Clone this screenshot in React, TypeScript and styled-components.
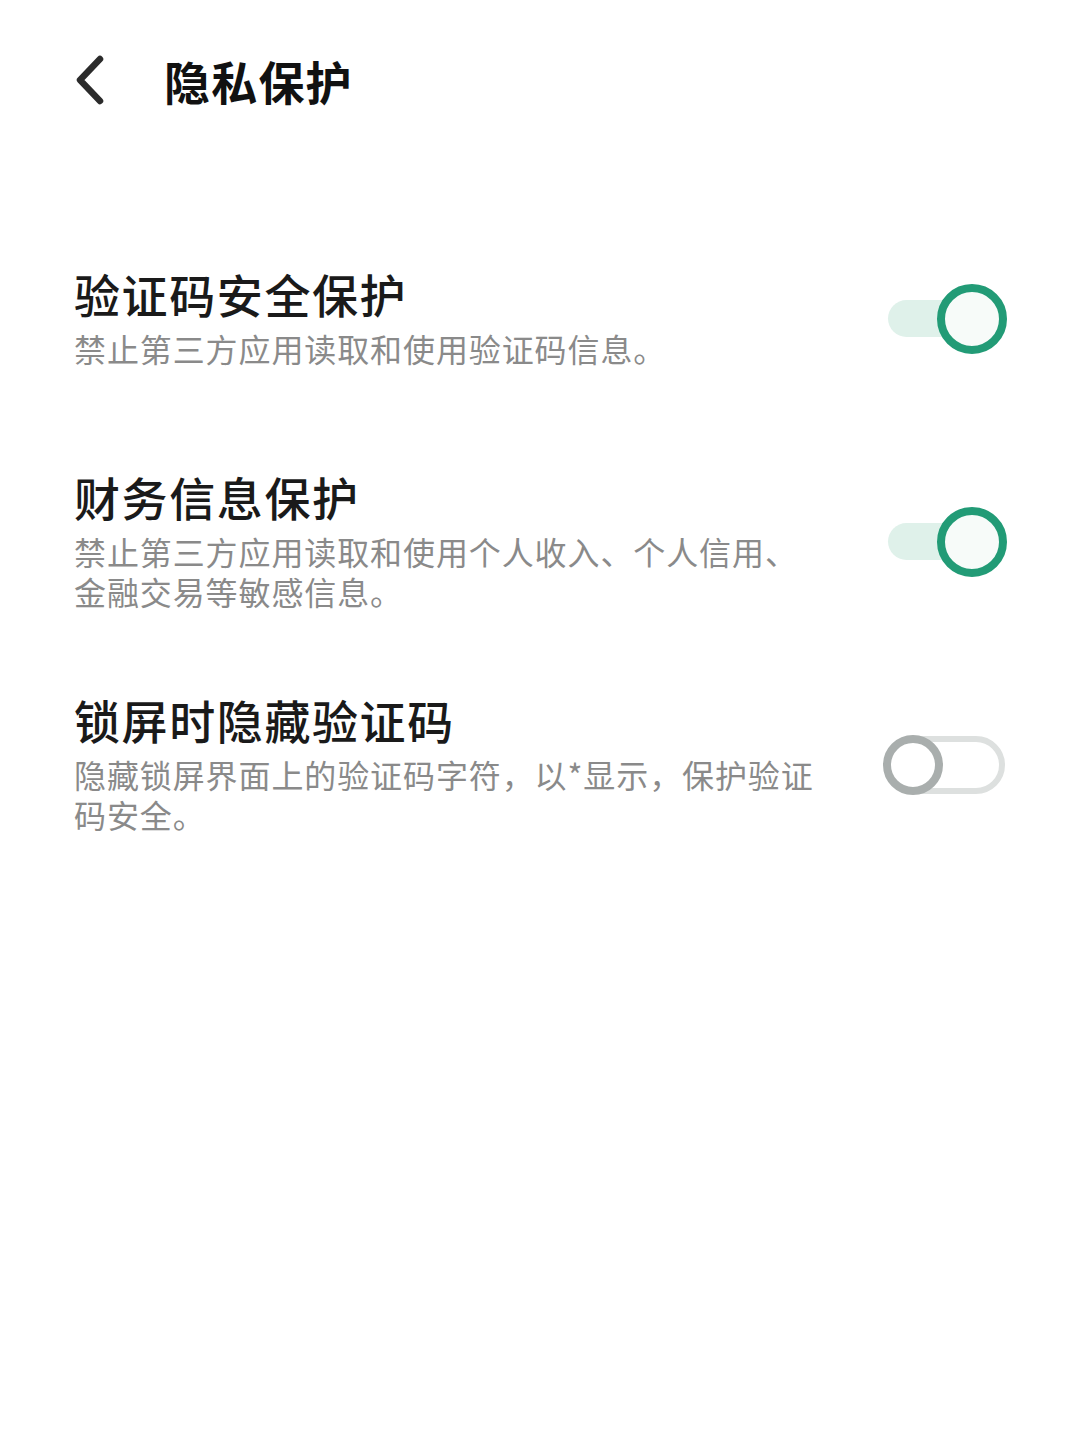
import React, { useState } from "react";
import styled, { createGlobalStyle } from "styled-components";

const GlobalStyle = createGlobalStyle`
  html, body {
    margin: 0;
    padding: 0;
    background: #ffffff;
  }
  body {
    font-family: "Noto Sans CJK SC", "Noto Sans", sans-serif;
  }
`;

type Item = {
  id: string;
  title: string;
  desc: string;
  on: boolean;
};

const initialItems: Item[] = [
  {
    id: "code",
    title: "验证码安全保护",
    desc: "禁止第三方应用读取和使用验证码信息。",
    on: true,
  },
  {
    id: "finance",
    title: "财务信息保护",
    desc: "禁止第三方应用读取和使用个人收入、个人信用、金融交易等敏感信息。",
    on: true,
  },
  {
    id: "lock",
    title: "锁屏时隐藏验证码",
    desc: "隐藏锁屏界面上的验证码字符，以*显示，保护验证码安全。",
    on: false,
  },
];

const App: React.FC = () => {
  const [items, setItems] = useState(initialItems);

  const toggle = (id: string) => {
    setItems((prev) =>
      prev.map((it) => (it.id === id ? { ...it, on: !it.on } : it))
    );
  };

  return (
    <Page>
      <GlobalStyle />
      <Header>
        <BackButton aria-label="返回">
          <svg width="34" height="50" viewBox="0 0 34 50" fill="none">
            <path
              d="M27 4 L7 25 L27 46"
              stroke="#2b2b2b"
              strokeWidth="6.5"
              strokeLinecap="round"
              strokeLinejoin="round"
            />
          </svg>
        </BackButton>
        <Title>隐私保护</Title>
      </Header>
      <List>
        {items.map((it) => (
          <Row key={it.id} onClick={() => toggle(it.id)}>
            <TextCol>
              <RowTitle>{it.title}</RowTitle>
              <RowDesc>{it.desc}</RowDesc>
            </TextCol>
            <Switch>
              <Track $on={it.on} />
              <Knob $on={it.on} />
            </Switch>
          </Row>
        ))}
      </List>
    </Page>
  );
};

export default App;

const Page = styled.div`
  width: 1080px;
  min-height: 1440px;
  background: #ffffff;
`;

const Header = styled.div`
  height: 160px;
  display: flex;
  align-items: center;
  padding-left: 73px;
`;

const BackButton = styled.button`
  width: 34px;
  height: 50px;
  padding: 0;
  border: none;
  background: transparent;
  display: flex;
  align-items: center;
  justify-content: center;
  margin-right: 57px;
  cursor: pointer;
`;

const Title = styled.h1`
  margin: 0;
  font-size: 46px;
  line-height: 56px;
  font-weight: 700;
  color: #111111;
  letter-spacing: 1.2px;
`;

const List = styled.div`
  padding-top: 47px;
  display: flex;
  flex-direction: column;
`;

const Row = styled.div`
  min-height: 223px;
  display: flex;
  align-items: center;
  justify-content: space-between;
  padding: 0 72px 0 74px;
  cursor: pointer;
`;

const TextCol = styled.div`
  display: flex;
  flex-direction: column;
  gap: 7px;
  max-width: 750px;
  margin-top: -5px;
`;

const RowTitle = styled.div`
  font-size: 46px;
  line-height: 56px;
  font-weight: 500;
  color: #1a1a1a;
  letter-spacing: 1.6px;
`;

const RowDesc = styled.div`
  font-size: 32px;
  line-height: 40px;
  font-weight: 400;
  color: #8a8a8a;
  letter-spacing: 0.9px;
`;

const Switch = styled.div`
  position: relative;
  flex: none;
  width: 124px;
  height: 70px;
`;

const Track = styled.div<{ $on: boolean }>`
  position: absolute;
  box-sizing: border-box;
  top: ${(p) => (p.$on ? "16px" : "6px")};
  left: ${(p) => (p.$on ? "4px" : "0px")};
  right: ${(p) => (p.$on ? "10px" : "3px")};
  height: ${(p) => (p.$on ? "37px" : "58px")};
  border-radius: 40px;
  background: ${(p) => (p.$on ? "#dff1ea" : "#ffffff")};
  border: ${(p) => (p.$on ? "none" : "6px solid #dde0df")};
`;

const Knob = styled.div<{ $on: boolean }>`
  position: absolute;
  box-sizing: border-box;
  top: ${(p) => (p.$on ? "0px" : "5px")};
  left: ${(p) => (p.$on ? "53px" : "-1px")};
  width: ${(p) => (p.$on ? "70px" : "60px")};
  height: ${(p) => (p.$on ? "70px" : "60px")};
  border-radius: 50%;
  background: ${(p) => (p.$on ? "#f7fbf9" : "#ffffff")};
  border: 8px solid ${(p) => (p.$on ? "#229b76" : "#a9aead")};
`;
